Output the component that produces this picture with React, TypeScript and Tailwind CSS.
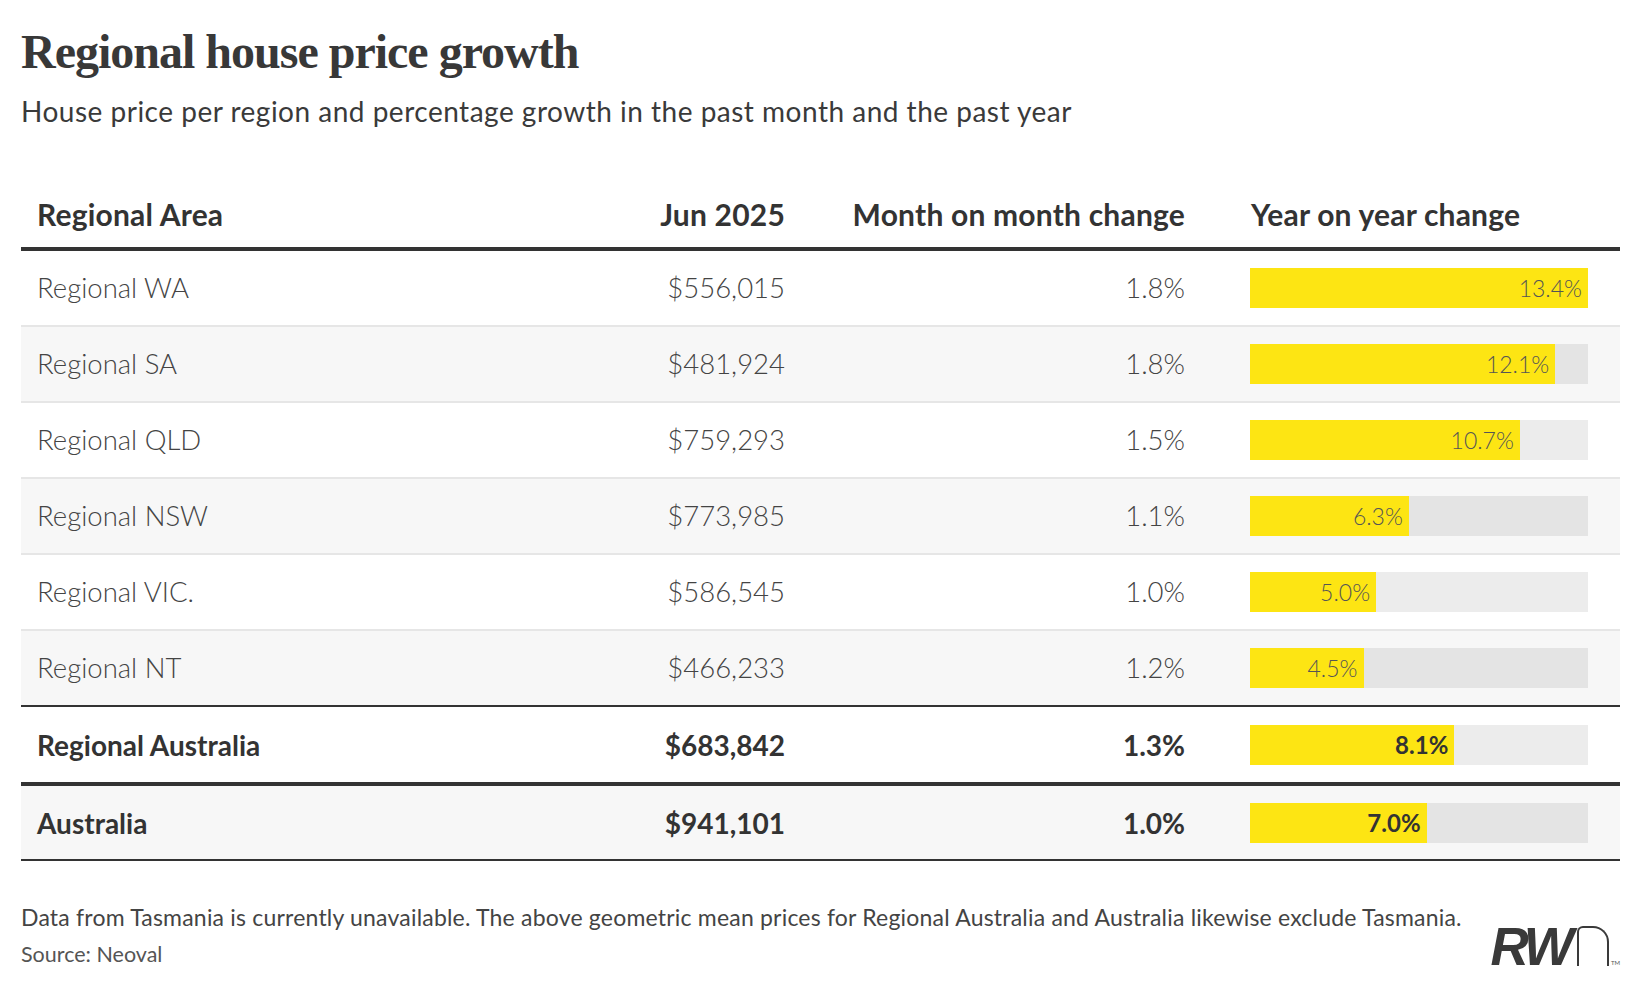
const rows = [
  { name: "Regional WA", price: "$556,015", mom: "1.8%", yoy: 13.4 },
  { name: "Regional SA", price: "$481,924", mom: "1.8%", yoy: 12.1 },
  { name: "Regional QLD", price: "$759,293", mom: "1.5%", yoy: 10.7 },
  { name: "Regional NSW", price: "$773,985", mom: "1.1%", yoy: 6.3 },
  { name: "Regional VIC.", price: "$586,545", mom: "1.0%", yoy: 5.0 },
  { name: "Regional NT", price: "$466,233", mom: "1.2%", yoy: 4.5 },
];

const MAX = 13.4;

const Bar = ({ value, bold }: { value: number; bold?: boolean }) => (
  <div className="h-[40px] w-full bg-black/[0.075]">
    <div
      className={`flex h-full items-center justify-end bg-[#fde513] pr-[6px] ${
        bold ? "text-[24px] font-bold text-[#333]" : "text-[23px] font-light text-[#555]"
      }`}
      style={{ width: `${(value / MAX) * 100}%` }}
    >
      {value.toFixed(1)}%
    </div>
  </div>
);

const Row = ({
  name,
  price,
  mom,
  yoy,
  bold,
  className,
}: {
  name: string;
  price: string;
  mom: string;
  yoy: number;
  bold?: boolean;
  className: string;
}) => (
  <div
    className={`grid grid-cols-[539px_225px_400px_1fr] items-center ${
      bold ? "text-[28px] font-bold text-[#333]" : "text-[27.5px] font-light text-[#444]"
    } ${className}`}
  >
    <div className="pl-4">{name}</div>
    <div className="text-right">{price}</div>
    <div className="text-right">{mom}</div>
    <div className="pl-[65px] pr-[32px]">
      <Bar value={yoy} bold={bold} />
    </div>
  </div>
);

export default function App() {
  return (
    <div
      className="h-[988px] w-[1640px] bg-white px-[21px] text-[#333]"
      style={{ fontFamily: "Lato, 'Open Sans', sans-serif" }}
    >
      <h1
        className="pt-[28px] text-[48px] font-bold leading-[48px] tracking-[-1px] text-[#383838]"
        style={{ fontFamily: "'Liberation Serif', 'DejaVu Serif', serif" }}
      >
        Regional house price growth
      </h1>
      <p className="mt-[19px] text-[28px] leading-[32px] tracking-[0.5px] text-[#3a3a3a]">
        House price per region and percentage growth in the past month and the past year
      </p>

      <div className="mt-[69px] w-[1599px]">
        <div className="grid grid-cols-[539px_225px_400px_1fr] border-b-4 border-[#333] pb-[15px] text-[30px] font-bold leading-[36px] tracking-[0.2px] text-[#333]">
          <div className="pl-4">Regional Area</div>
          <div className="text-right">Jun 2025</div>
          <div className="text-right">Month on month change</div>
          <div className="pl-[66px]">Year on year change</div>
        </div>

        {rows.map((r, i) => (
          <Row
            key={r.name}
            {...r}
            className={`h-[76px] border-b-2 ${i % 2 === 1 ? "bg-[#f7f7f7]" : "bg-white"} ${
              i === rows.length - 1 ? "border-[#333]" : "border-[#e6e6e6]"
            }`}
          />
        ))}

        <Row
          name="Regional Australia"
          price="$683,842"
          mom="1.3%"
          yoy={8.1}
          bold
          className="h-[79px] border-b-4 border-[#333] bg-white"
        />
        <Row
          name="Australia"
          price="$941,101"
          mom="1.0%"
          yoy={7.0}
          bold
          className="h-[75px] border-b-2 border-[#333] bg-[#f7f7f7]"
        />
      </div>

      <div className="flex w-[1599px] items-end justify-between pt-[38px]">
        <div className="leading-[37px]">
          <p className="text-[23px] tracking-[0.2px] text-[#444]">
            Data from Tasmania is currently unavailable. The above geometric mean prices for Regional Australia and Australia likewise exclude Tasmania.
          </p>
          <p className="text-[21.5px] text-[#555]">Source: Neoval</p>
        </div>

        {/* RWn logo */}
        <div className="mb-[7px] flex items-end">
          <span
            className="text-[53px] font-bold italic leading-[39px] tracking-[-4px] text-[#3a3a3a]"
            style={{ fontFamily: "'Liberation Sans', Arial, sans-serif" }}
          >
            RW
          </span>
          <div className="ml-[7px] h-[40px] w-[32px] rounded-tl-[6px] rounded-tr-[16px] border-[2.5px] border-b-0 border-[#3a3a3a]" />
          <span className="ml-[2px] text-[6px] leading-[6px] text-[#555]">TM</span>
        </div>
      </div>
    </div>
  );
}
